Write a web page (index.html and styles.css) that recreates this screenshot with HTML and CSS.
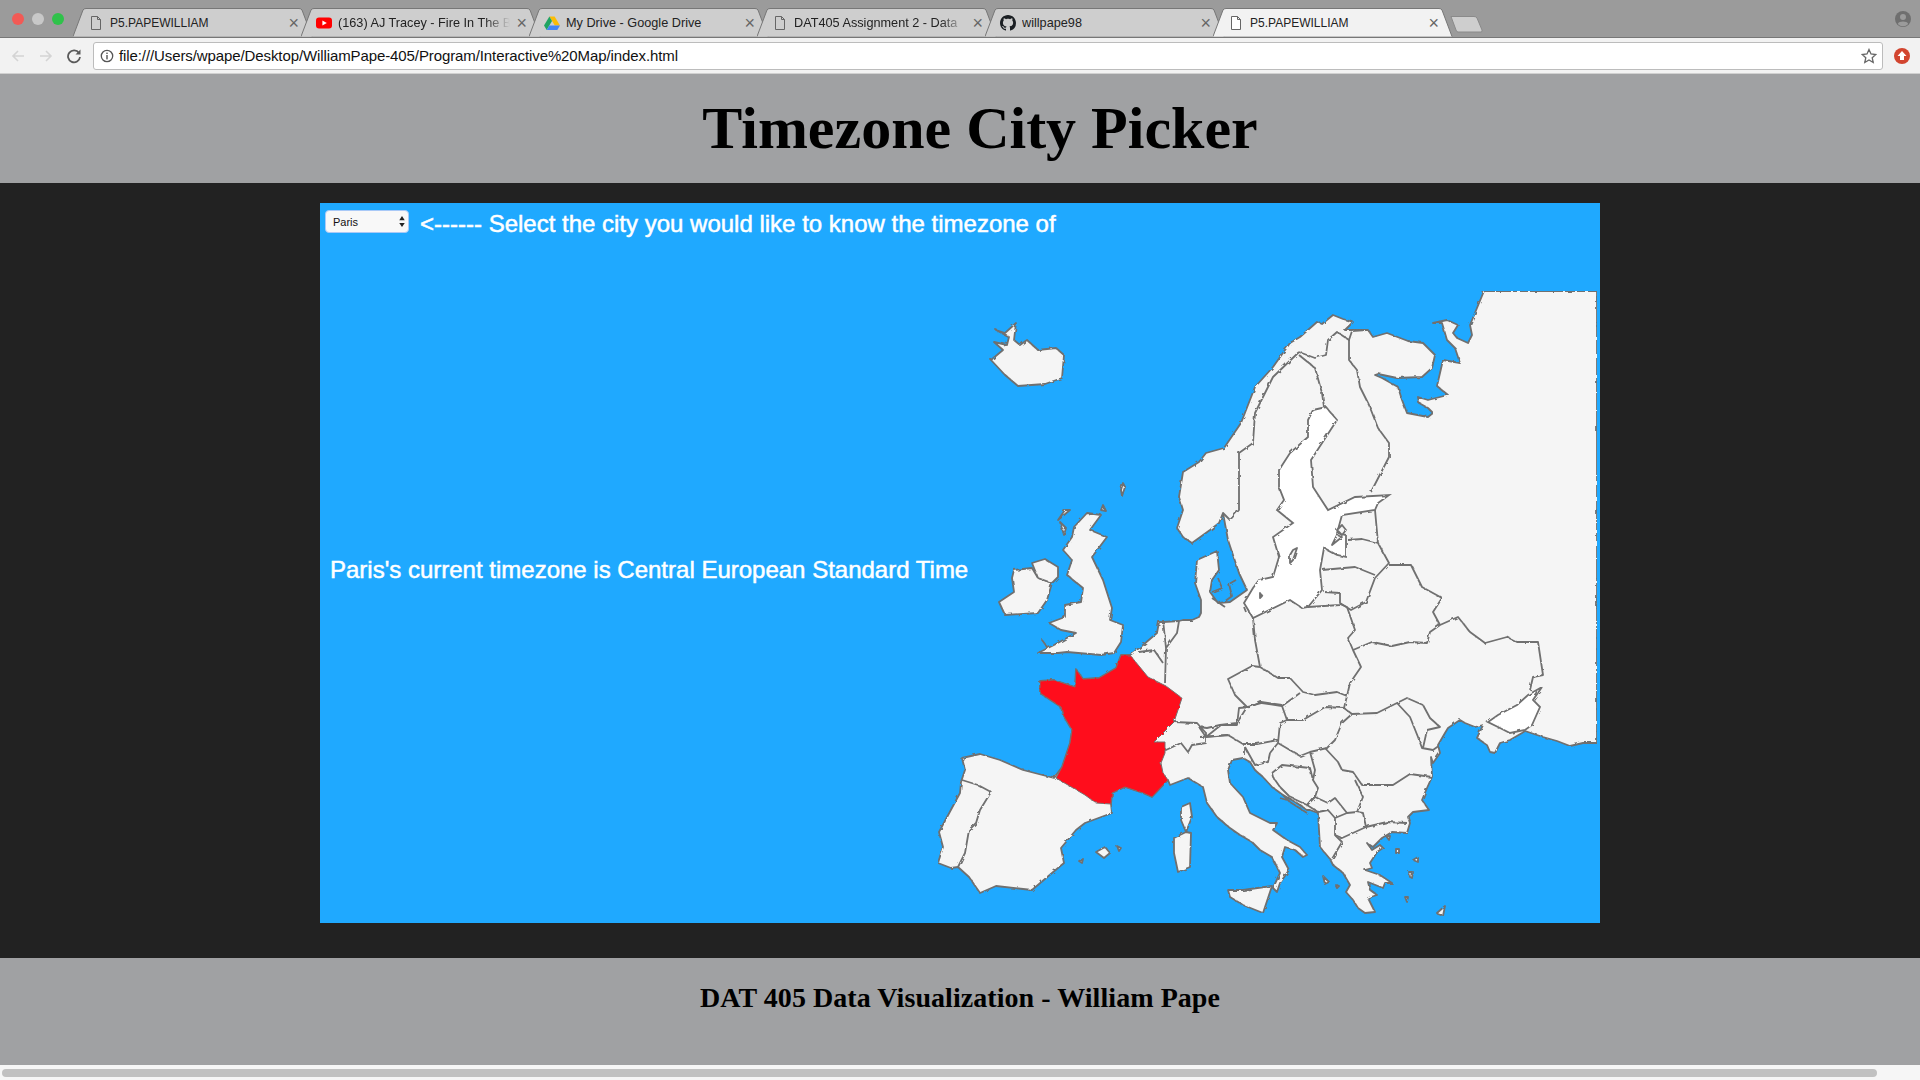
FILE: index.html
```html
<!DOCTYPE html>
<html lang="en">
<head>
  <meta charset="UTF-8" />
  <title>P5.PAPEWILLIAM</title>
  <link rel="stylesheet" href="styles.css">
</head>
<body>
  <!-- browser chrome -->
  <div class="tabstrip">
    <div class="lights">
      <span class="light red"></span>
      <span class="light grey"></span>
      <span class="light green"></span>
    </div>
    <div class="tabs">
      <div class="tab">
        <svg class="tab-shape" viewBox="0 0 240 30"><path d="M0 29.5 L10 3 Q11 1.5 13 1.5 H226 Q228 1.5 229 3 L239 29.5" /></svg>
        <svg class="fav" viewBox="0 0 16 16"><path class="file-icon" d="M3.5 1.5 H9.5 L12.5 4.5 V14.5 H3.5 Z M9.5 1.5 V4.5 H12.5" /></svg>
        <span class="tab-title caps">P5.PAPEWILLIAM</span>
        <span class="tab-x">×</span>
      </div>
      <div class="tab">
        <svg class="tab-shape" viewBox="0 0 240 30"><path d="M0 29.5 L10 3 Q11 1.5 13 1.5 H226 Q228 1.5 229 3 L239 29.5" /></svg>
        <svg class="fav" viewBox="0 0 16 16"><rect x="0" y="2.5" width="16" height="11" rx="3" fill="#f00" /><path d="M6.4 5.5 L10.8 8 L6.4 10.5 Z" fill="#fff" /></svg>
        <span class="tab-title fade">(163) AJ Tracey - Fire In The B</span>
        <span class="tab-x">×</span>
      </div>
      <div class="tab">
        <svg class="tab-shape" viewBox="0 0 240 30"><path d="M0 29.5 L10 3 Q11 1.5 13 1.5 H226 Q228 1.5 229 3 L239 29.5" /></svg>
        <svg class="fav" viewBox="0 0 16 16"><path d="M5.4 1.5 H10.6 L16 10.5 H10.8 Z" fill="#fbbc04" /><path d="M5.4 1.5 L0 10.5 L2.7 15 L8 6 Z" fill="#1fa463" /><path d="M2.7 15 H13.3 L16 10.5 H5.4 Z" fill="#4285f4" /></svg>
        <span class="tab-title">My Drive - Google Drive</span>
        <span class="tab-x">×</span>
      </div>
      <div class="tab">
        <svg class="tab-shape" viewBox="0 0 240 30"><path d="M0 29.5 L10 3 Q11 1.5 13 1.5 H226 Q228 1.5 229 3 L239 29.5" /></svg>
        <svg class="fav" viewBox="0 0 16 16"><path class="file-icon" d="M3.5 1.5 H9.5 L12.5 4.5 V14.5 H3.5 Z M9.5 1.5 V4.5 H12.5" /></svg>
        <span class="tab-title fade">DAT405 Assignment 2 - Data</span>
        <span class="tab-x">×</span>
      </div>
      <div class="tab">
        <svg class="tab-shape" viewBox="0 0 240 30"><path d="M0 29.5 L10 3 Q11 1.5 13 1.5 H226 Q228 1.5 229 3 L239 29.5" /></svg>
        <svg class="fav" viewBox="0 0 16 16"><path fill="#1b1f23" d="M8 0C3.58 0 0 3.58 0 8c0 3.54 2.29 6.53 5.47 7.59.4.07.55-.17.55-.38 0-.19-.01-.82-.01-1.49-2.01.37-2.53-.49-2.69-.94-.09-.23-.48-.94-.82-1.13-.28-.15-.68-.52-.01-.53.63-.01 1.08.58 1.23.82.72 1.21 1.87.87 2.33.66.07-.52.28-.87.51-1.07-1.78-.2-3.64-.89-3.64-3.95 0-.87.31-1.59.82-2.15-.08-.2-.36-1.02.08-2.12 0 0 .67-.21 2.2.82.64-.18 1.32-.27 2-.27s1.36.09 2 .27c1.53-1.04 2.2-.82 2.2-.82.44 1.1.16 1.92.08 2.12.51.56.82 1.27.82 2.15 0 3.07-1.87 3.75-3.65 3.95.29.25.54.73.54 1.48 0 1.07-.01 1.93-.01 2.2 0 .21.15.46.55.38A8.01 8.01 0 0 0 16 8c0-4.42-3.58-8-8-8z" /></svg>
        <span class="tab-title">willpape98</span>
        <span class="tab-x">×</span>
      </div>
      <div class="tab active">
        <svg class="tab-shape" viewBox="0 0 240 30"><path d="M0 29.5 L10 3 Q11 1.5 13 1.5 H226 Q228 1.5 229 3 L239 29.5" /></svg>
        <svg class="fav" viewBox="0 0 16 16"><path class="file-icon" d="M3.5 1.5 H9.5 L12.5 4.5 V14.5 H3.5 Z M9.5 1.5 V4.5 H12.5" /></svg>
        <span class="tab-title caps">P5.PAPEWILLIAM</span>
        <span class="tab-x">×</span>
      </div>
    </div>
    <svg class="newtab" viewBox="0 0 34 18"><path d="M1 1.5 H24 Q26 1.5 27 3 L32 15 Q32.5 17 31 17 H8 Q6.5 17 6 15 Z" /></svg>
    <svg class="profile" viewBox="0 0 16 16"><circle cx="8" cy="8" r="8" fill="#6f6f6f" /><circle cx="8" cy="6" r="3" fill="#9b9b9b" /><path d="M2.8 13 C4 9.8 12 9.8 13.2 13 A7 7 0 0 1 2.8 13 Z" fill="#9b9b9b" /></svg>
  </div>

  <div class="toolbar">
    <svg class="nav-icon" viewBox="0 0 16 16"><path class="nav-off" d="M14 8 H3 M8 3 L3 8 L8 13" /></svg>
    <svg class="nav-icon" viewBox="0 0 16 16"><path class="nav-off" d="M2 8 H13 M8 3 L13 8 L8 13" /></svg>
    <svg class="nav-icon" viewBox="0 0 16 16"><path class="nav-on" d="M13 5 A6 6 0 1 0 14 9" /><path d="M14.5 1.5 V6.5 H9.5 Z" fill="#5a5a5a" /></svg>
    <div class="omnibox">
      <svg class="info" viewBox="0 0 14 14"><circle cx="7" cy="7" r="5.7" fill="none" stroke="#555" stroke-width="1.3" /><rect x="6.3" y="6" width="1.4" height="4.4" fill="#555" /><rect x="6.3" y="3.6" width="1.4" height="1.4" fill="#555" /></svg>
      <span class="url">file:///Users/wpape/Desktop/WilliamPape-405/Program/Interactive%20Map/index.html</span>
      <svg class="star" viewBox="0 0 16 16"><path d="M8 1.5 L10 6 L14.8 6.5 L11.2 9.7 L12.2 14.5 L8 12 L3.8 14.5 L4.8 9.7 L1.2 6.5 L6 6 Z" /></svg>
    </div>
    <svg class="ext" viewBox="0 0 16 16"><circle cx="8" cy="8" r="8" fill="#d2452f" /><path d="M8 3 L12.5 8 H10 V12 H6 V8 H3.5 Z" fill="#fff" /></svg>
  </div>

  <!-- page -->
  <header class="page-head">
    <h1>Timezone City Picker</h1>
  </header>

  <main class="stage">
    <div class="sketch">
      <svg class="map" viewBox="320 203 1280 720">
        <defs>
          <!-- roughens the hand traced coastlines -->
          <filter id="rough" x="0" y="0" width="100%" height="100%">
            <feTurbulence type="fractalNoise" baseFrequency="0.18" numOctaves="2" seed="4" result="noise" />
            <feDisplacementMap in="SourceGraphic" in2="noise" scale="3" />
            <feGaussianBlur stdDeviation="0.35" />
          </filter>
        </defs>
        <g filter="url(#rough)">
        <!-- mainland -->
        <path class="land" d="M1484 291 H1597 V743 L1583 743 1570 746 1557 741 1543 737 1525 731 1522 733 1510 740 1500 743 1495 753 1490 752 1487 745 1477 738 1483 725 1475 727 1465 723 1460 720 1448 728 1445 733 1438 745 1440 753 1433 763 1431 757 1432 777 1427 788 1422 800 1429 810 1413 812 1408 817 1410 823 1407 833 1392 832 1382 838 1373 847 1367 843 1372 850 1380 845 1383 848 1377 852 1370 863 1372 868 1365 870 1380 875 1392 883 1385 883 1383 888 1368 882 1370 890 1377 895 1368 898 1375 912 1365 913 1358 908 1353 900 1346 892 1350 885 1343 873 1333 865 1330 859 1320 847 1318 813 1310 810 1307 810 1297 803 1283 795 1272 787 1263 777 1255 770 1250 762 1243 758 1232 760 1228 770 1230 783 1243 797 1250 813 1270 823 1277 823 1273 830 1287 840 1300 847 1307 855 1303 857 1295 850 1285 847 1282 857 1289 870 1280 883 1277 892 1273 888 1280 873 1272 857 1260 850 1252 842 1240 835 1230 828 1217 817 1207 803 1203 787 1188 778 1170 785 1168 780 1152 797 1143 793 1125 787 1112 793 1111 804 1112 813 1085 823 1076 830 1061 848 1064 863 1052 873 1032 890 996 886 980 893 969 877 958 867 951 868 938 863 943 847 939 832 960 793 961 782 965 770 962 758 980 754 1000 760 1023 770 1054 778 1062 767 1070 743 1072 730 1063 715 1061 707 1040 693 1040 681 1054 680 1075 687 1076 669 1083 679 1099 678 1116 668 1121 655 1130 655 1143 645 1157 633 1159 622 1163 622 1179 621 1183 620 1192 620 1199 617 1201 613 1201 600 1195 583 1197 560 1217 551 1219 570 1212 580 1210 592 1218 603 1230 602 1247 590 1239 573 1228 540 1223 513 1219 523 1210 530 1192 543 1183 537 1177 528 1183 510 1179 497 1183 472 1199 462 1206 453 1224 448 1241 423 1255 387 1273 367 1290 343 1300 337 1317 322 1322 324 1333 315 1343 319 1353 322 1345 330 1362 330 1368 330 1373 337 1387 333 1408 341 1423 343 1435 355 1432 368 1422 377 1397 378 1378 374 1375 375 1382 378 1398 387 1402 400 1407 413 1428 417 1433 413 1428 408 1419 403 1418 397 1428 400 1448 395 1437 386 1443 360 1460 363 1455 348 1447 340 1442 323 1433 323 1447 320 1458 325 1453 333 1457 338 1468 343 1472 335 1470 325 Z" />
        <!-- baltic and azov -->
        <path class="inland" d="M1313 410 L1326 407 1337 420 1324 440 1311 460 1313 487 1328 510 1355 497 1389 495 1378 503 1375 510 1342 515 1337 533 1346 535 1346 557 1337 555 1324 548 1320 570 1322 590 1308 607 1302 608 1290 600 1253 618 1244 603 1253 588 1259 580 1273 577 1279 557 1273 537 1293 523 1277 510 1284 500 1279 487 1279 470 1290 453 1308 437 1308 420 Z" />
        <path class="inland" d="M1542 687 L1533 700 1540 707 1532 725 1525 730 1510 733 1500 728 1488 722 1498 715 1517 705 1528 695 Z" />
        <!-- borders -->
        <path class="line" d="M1299 352 L1273 377 1255 413 1253 443 1239 453 1239 487 1239 510 1230 520 1223 513" />
        <path class="line" d="M1299 352 L1315 358 1326 355 1328 340 1337 332 1349 340 1352 331 1366 330" />
        <path class="line" d="M1299 355 L1315 368 1322 393 1324 407" />
        <path class="line" d="M1349 340 L1349 360 1357 370 1360 387 1369 405 1378 428 1389 443 1389 457 1371 492" />
        <path class="line" d="M1375 510 L1378 543 M1348 540 L1362 539 1378 543 1389 563 1375 578 M1322 570 L1355 567 1375 575" />
        <path class="line" d="M1389 565 L1411 565 1422 587 1442 598 1433 612 1440 625" />
        <path class="line" d="M1375 578 L1366 602 1351 610 1340 603 1340 593 1324 592 M1308 607 L1340 605" />
        <path class="line" d="M1253 618 L1255 640 1260 667 M1340 604 L1347 607 1355 630 1348 638 1353 650 1361 667 1350 683 1347 696 1344 708" />
        <path class="line" d="M1260 667 L1278 678 1290 678 1303 692 1315 695 1337 692 1347 696" />
        <path class="line" d="M1353 650 L1372 642 1392 646 1410 642 1427 643 1430 632 1440 625 1458 617 1470 632 1485 643 1507 637 1517 642 1538 642 1543 675 1533 677 1530 690" />
        <path class="line" d="M1260 667 L1252 666 1228 679 1235 695 1247 707 1262 703 1282 706 1300 693" />
        <path class="line" d="M1282 706 L1287 720 1303 720 1325 707 1344 708 1352 714 1342 723 1335 740 1327 748 1310 752 1300 756 1278 743 1280 723 1287 720" />
        <path class="line" d="M1247 707 L1237 723 1220 725 1207 728 1199 727 M1200 737 L1228 735 1243 744 1257 744 1278 740" />
        <path class="line" d="M1352 714 L1377 713 1397 703 1407 698 1423 705 1430 718 1440 727 1427 730 1423 748 M1397 703 L1410 717 1418 737 1422 748 1433 750 1440 745" />
        <path class="line" d="M1432 777 L1410 774 1393 785 1362 785 1353 772 1342 770 1338 762 1325 748" />
        <path class="line" d="M1310 752 L1315 770 1313 780 1318 788 1315 797 1328 803 M1355 780 L1363 797 1357 812 1347 813 1335 798 1328 803" />
        <path class="line" d="M1357 812 L1363 813 1366 827 1387 822 1407 823 M1347 813 L1335 818 1335 835 1342 838 1366 827" />
        <path class="line" d="M1318 812 L1328 810 1335 818 M1335 835 L1342 842 1332 859 M1307 805 L1315 795 M1318 812 L1307 805" />
        <path class="line" d="M1272 773 L1282 765 1310 768 1313 780 M1315 797 L1307 805 1290 797 1280 787 1273 777 1272 773" />
        <path class="line" d="M1270 753 L1268 762 1255 765 1245 747 M1245 755 L1245 747 M1278 743 L1270 753" />
        <path class="line" d="M1163 620 L1166 648 1165 683 M1139 652 L1154 650 1163 663 M1179 621 L1177 633 1166 648" />
        <path class="line" d="M1174 722 L1197 723 1206 733 1206 743 1192 745 1188 752 1181 743 1166 750 1157 742 M1199 727 L1206 737 1228 735 M1206 737 L1221 725 1237 725 1239 708 1250 707 1261 702 1282 705" />
        <path class="line" d="M962 780 L978 785 991 792 980 810 976 823 969 830 965 853 958 867" />
        <!-- denmark -->
        <path class="line" d="M1212 592 L1222 588 1218 578 M1224 602 L1232 596 1229 584 1236 580 M1212 598 L1225 607 M1244 607 L1246 612" />
        <!-- france -->
        <path class="france" d="M1130 655 L1148 677 1166 686 1182 698 1174 722 1154 742 1165 742 1165 753 1161 763 1163 773 1168 780 1152 797 1143 793 1125 787 1112 793 1111 804 1096 803 1085 795 1056 778 1062 767 1070 743 1072 730 1063 715 1061 707 1040 693 1040 681 1054 680 1075 687 1076 669 1083 679 1099 678 1116 668 1121 655 Z" />
        <!-- britain and ireland -->
        <path class="land" d="M1087 513 L1101 515 1090 530 1107 537 1092 557 1103 580 1112 608 1110 620 1123 625 1121 642 1114 653 1101 655 1067 652 1058 653 1038 653 1054 645 1076 633 1061 630 1049 623 1065 617 1065 605 1081 602 1083 588 1067 575 1072 560 1063 550 1072 537 1074 527 Z" />
        <path class="land" d="M1014 570 L1032 568 1038 578 1052 583 1047 600 1038 613 1005 615 999 602 1014 592 1012 578 Z" />
        <path class="land" d="M1032 563 L1045 559 1058 567 1058 577 1052 583 1038 578 Z" />
        <path class="land" d="M996 330 L1005 333 1016 323 1014 340 1020 345 1027 340 1038 350 1056 348 1064 355 1062 378 1045 384 1018 386 1005 375 991 360 1003 350 994 342 1007 345 1009 337 Z" />
        <!-- islands -->
        <path class="land" d="M1190 803 L1192 817 1186 832 1181 820 1181 807 Z" />
        <path class="land" d="M1186 832 L1191 833 1190 867 1178 872 1174 853 1174 838 Z" />
        <path class="land" d="M1096 852 L1105 847 1110 853 1104 858 Z M1117 846 L1121 848 1119 851 Z M1079 861 L1083 859 1082 863 Z" />
        <path class="land" d="M1228 890 L1243 890 1272 886 1263 913 1243 905 1230 897 Z" />
        <path class="land" d="M1437 913 L1445 906 1443 916 1438 914 Z M1413 860 L1418 857 1418 862 Z M1409 872 L1413 872 1412 878 1410 877 Z M1396 849 L1399 849 1399 853 1396 853 Z M1386 836 L1390 836 1389 840 Z M1405 897 L1408 897 1407 902 Z M1335 884 L1339 886 1337 888 Z M1323 876 L1329 882 1325 884 Z" />
        <path class="land" d="M1123 483 L1125 487 1122 496 1121 490 Z M1103 505 L1106 511 1101 510 Z M1065 510 L1070 510 1058 520 Z M1060 522 L1066 528 1064 535 Z M1042 640 L1048 648 Z M1342 525 L1346 530 1342 535 1337 530 Z M1337 535 L1342 537 1332 545 Z M1293 550 L1297 548 1293 560 1290 563 1290 555 Z M1260 593 L1262 596 1260 598 Z" />
        <path class="line" d="M1283 795 L1290 802 1307 813 M1280 798 L1287 800" />
        </g>
      </svg>

      <div class="sketch-top">
        <div class="city-select">
          <select class="city">
            <option>Paris</option>
            <option>Madrid</option>
            <option>Berlin</option>
            <option>London</option>
          </select>
          <svg class="city-arrows" viewBox="0 0 6 12"><path d="M3 0 L6 4.5 H0 Z M3 12 L6 7.5 H0 Z" /></svg>
        </div>
        <span class="sketch-text">&lt;------ Select the city you would like to know the timezone of</span>
      </div>
      <p class="sketch-text result">Paris's current timezone is Central European Standard Time</p>
    </div>
  </main>

  <footer class="page-foot">
    <h2>DAT 405 Data Visualization - William Pape</h2>
  </footer>

  <div class="scrollbar"><div class="thumb"></div></div>
</body>
</html>
```

FILE: styles.css
```css
html, body {
  height: 100%;
  margin: 0;
  overflow: hidden;
}

body {
  display: flex;
  flex-direction: column;
  font-family: "Liberation Sans", Arial, sans-serif;
  background: #222;
}

/* browser chrome */
.tabstrip {
  height: 37px;
  flex: none;
  display: flex;
  align-items: flex-end;
  background: #9b9b9b;
  position: relative;
}

.lights {
  position: absolute;
  left: 12px;
  top: 13px;
  display: flex;
  gap: 8px;
}

.light {
  width: 12px;
  height: 12px;
  border-radius: 50%;
}

.light.red { background: #f25a55; }
.light.grey { background: #c8c8c8; }
.light.green { background: #2fc24a; }

.tabs {
  display: flex;
  margin-left: 73px;
}

.tab {
  width: 240px;
  height: 30px;
  margin-right: -12px;
  padding: 1px 14px 0 15px;
  box-sizing: border-box;
  display: flex;
  align-items: center;
  gap: 6px;
  position: relative;
  color: #222;
}

.tab-shape {
  position: absolute;
  left: 0;
  top: 0;
  width: 240px;
  height: 30px;
}

.tab-shape path {
  fill: #cecece;
  stroke: #777;
  stroke-width: 1;
}

.tab.active {
  z-index: 1;
}

.tab.active .tab-shape path {
  fill: #f2f2f2;
}

.fav {
  width: 16px;
  height: 16px;
  flex: none;
  position: relative;
}

.file-icon {
  fill: #fff;
  stroke: #666;
  stroke-width: 1;
}

.tab:not(.active) .file-icon {
  fill: none;
}

.tab-title {
  flex: 1;
  min-width: 0;
  position: relative;
  font-size: 12.7px;
  white-space: nowrap;
  overflow: hidden;
}

.tab-title.caps {
  font-size: 12px;
}

.tab-title.fade {
  -webkit-mask-image: linear-gradient(to right, #000 85%, transparent);
  mask-image: linear-gradient(to right, #000 85%, transparent);
}

.tab-x {
  position: relative;
  font-size: 18px;
  line-height: 16px;
  color: #666;
}

.newtab {
  position: absolute;
  left: 1450px;
  top: 15px;
  width: 34px;
  height: 18px;
}

.newtab path {
  fill: #cecece;
  stroke: #8a8a8a;
}

.profile {
  position: absolute;
  right: 9px;
  top: 11px;
  width: 16px;
  height: 16px;
}

.toolbar {
  height: 37px;
  flex: none;
  box-sizing: border-box;
  display: flex;
  align-items: center;
  background: #f2f2f2;
  border-top: 1px solid #777;
  border-bottom: 1px solid #d0d0d0;
  padding-left: 10px;
}

.nav-icon {
  width: 16px;
  height: 16px;
  margin-right: 12px;
  flex: none;
}

.nav-off {
  fill: none;
  stroke: #d4d4d4;
  stroke-width: 1.6;
}

.nav-on {
  fill: none;
  stroke: #5a5a5a;
  stroke-width: 1.8;
}

.omnibox {
  width: 1790px;
  height: 28px;
  margin-left: -1px;
  box-sizing: border-box;
  display: flex;
  align-items: center;
  background: #fff;
  border: 1px solid #bcbcbc;
  border-radius: 3px;
  padding: 0 5px 0 6px;
}

.info {
  width: 14px;
  height: 14px;
  flex: none;
}

.url {
  flex: 1;
  margin-left: 5px;
  font-size: 15px;
  letter-spacing: -0.1px;
  color: #111;
}

.star {
  width: 16px;
  height: 16px;
}

.star path {
  fill: none;
  stroke: #666;
  stroke-width: 1.3;
}

.ext {
  width: 16px;
  height: 16px;
  margin-left: 11px;
}

/* page */
.page-head {
  height: 109px;
  flex: none;
  display: flex;
  align-items: center;
  justify-content: center;
  padding-left: 40px;
  background: #a0a1a3;
}

h1 {
  margin: 0;
  font-family: "Liberation Serif", "Times New Roman", serif;
  font-size: 60px;
  font-weight: bold;
  color: #000;
}

.stage {
  flex: 1;
  padding: 20px 0 0 320px;
  background: #222;
}

.sketch {
  width: 1280px;
  height: 720px;
  position: relative;
  background: #1fa9ff;
}

.map {
  position: absolute;
  left: 0;
  top: 0;
  width: 1280px;
  height: 720px;
}

.land {
  fill: #f5f5f5;
  stroke: #6f6f6f;
  stroke-width: 1.8;
  stroke-linejoin: round;
}

.inland {
  fill: #fff;
  stroke: #6f6f6f;
  stroke-width: 1.8;
}

.line {
  fill: none;
  stroke: #6f6f6f;
  stroke-width: 1.8;
  stroke-linejoin: round;
}

.france {
  fill: #ff0f1e;
  stroke: #7a6f6f;
  stroke-width: 1;
}

.sketch-top {
  display: flex;
  align-items: flex-start;
  gap: 11px;
  padding: 7px 0 0 5px;
  position: relative;
}

.city-select {
  position: relative;
  width: 84px;
  height: 23px;
}

.city {
  width: 100%;
  height: 100%;
  appearance: none;
  -webkit-appearance: none;
  padding: 0 0 0 7px;
  font-family: "Liberation Sans", Arial, sans-serif;
  font-size: 11px;
  color: #111;
  background: #f8f8f8;
  border: 1px solid #a9c9f7;
  border-radius: 4px;
}

.city-arrows {
  position: absolute;
  right: 4px;
  top: 6px;
  width: 6px;
  height: 11px;
  fill: #222;
}

.sketch-text {
  margin: 0;
  font-size: 24px;
  color: #fff;
  white-space: nowrap;
  -webkit-text-stroke: 0.5px #fff;
}

.result {
  position: relative;
  margin: 318px 0 0 10px;
}

.page-foot {
  height: 107px;
  flex: none;
  box-sizing: border-box;
  padding-top: 24px;
  text-align: center;
  background: #a0a1a3;
}

h2 {
  margin: 0;
  font-family: "Liberation Serif", "Times New Roman", serif;
  font-size: 28px;
  letter-spacing: 0.06px;
  font-weight: bold;
  color: #000;
}

.scrollbar {
  height: 15px;
  flex: none;
  box-sizing: border-box;
  padding: 4px 43px 3px 2px;
  background: #f6f6f6;
}

.thumb {
  height: 8px;
  background: #c1c1c1;
  border-radius: 4px;
}
```
